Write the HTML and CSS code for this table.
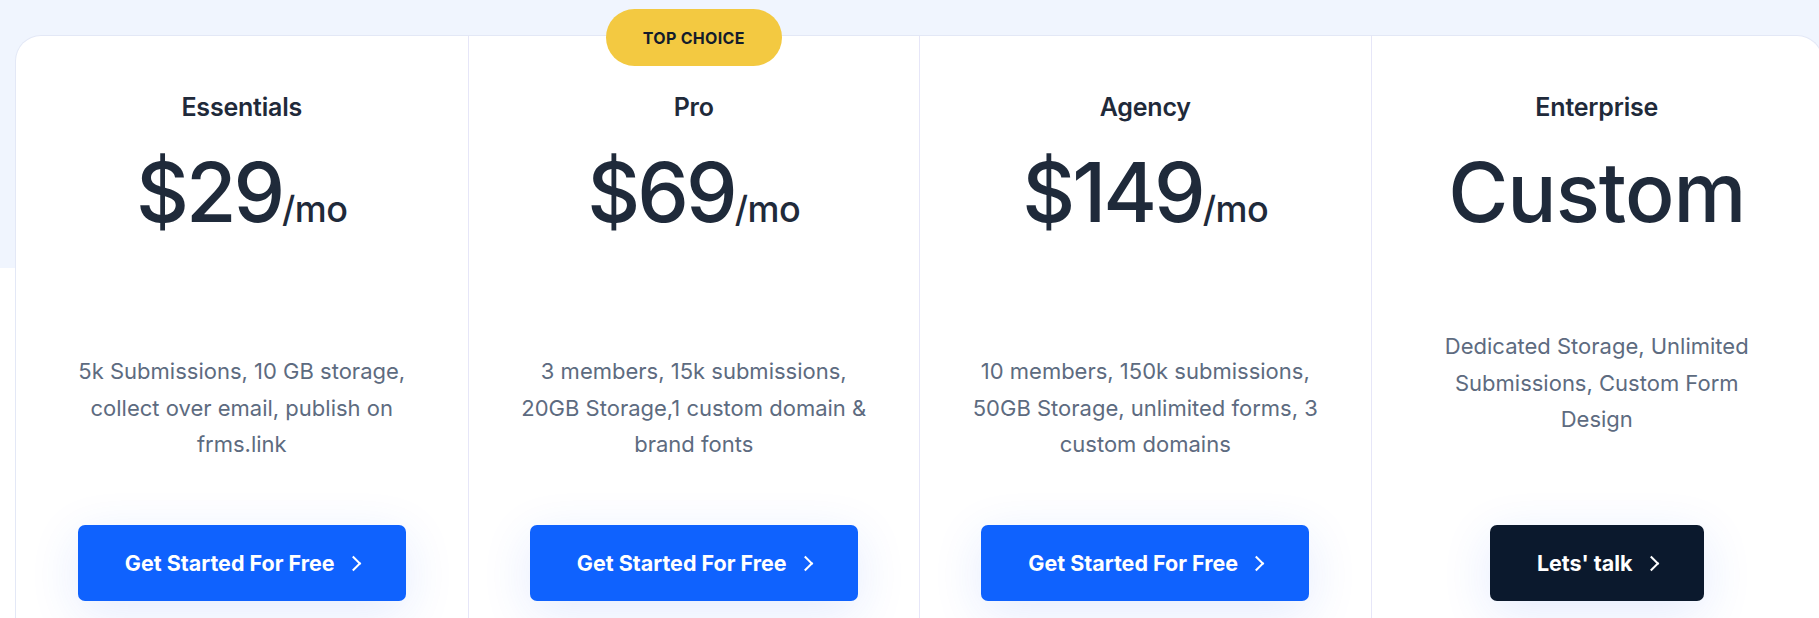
FILE: index.html
```html
<!DOCTYPE html>
<html lang="en">
<head>
  <meta charset="UTF-8">
  <meta name="viewport" content="width=device-width, initial-scale=1.0">
  <title>Pricing</title>
  <link rel="stylesheet" href="styles.css">
</head>
<body>
  <section class="pricing">
    <div class="plans">
      <div class="plan">
        <h3 class="plan-name">Essentials</h3>
        <div class="plan-price">$29<span class="per">/mo</span></div>
        <p class="plan-desc">5k Submissions, 10 GB storage, collect over email, publish on frms.link</p>
        <a href="#" class="btn">Get Started For Free <span class="chev"></span></a>
      </div>

      <div class="plan">
        <span class="badge">TOP CHOICE</span>
        <h3 class="plan-name">Pro</h3>
        <div class="plan-price">$69<span class="per">/mo</span></div>
        <p class="plan-desc">3 members, 15k submissions, 20GB Storage,1 custom domain &amp; brand fonts</p>
        <a href="#" class="btn">Get Started For Free <span class="chev"></span></a>
      </div>

      <div class="plan">
        <h3 class="plan-name">Agency</h3>
        <div class="plan-price">$149<span class="per">/mo</span></div>
        <p class="plan-desc">10 members, 150k submissions, 50GB Storage, unlimited forms, 3 custom domains</p>
        <a href="#" class="btn">Get Started For Free <span class="chev"></span></a>
      </div>

      <div class="plan">
        <h3 class="plan-name">Enterprise</h3>
        <div class="plan-price custom">Custom</div>
        <p class="plan-desc narrow">Dedicated Storage, Unlimited Submissions, Custom Form Design</p>
        <a href="#" class="btn dark">Lets' talk <span class="chev"></span></a>
      </div>
    </div>
  </section>
</body>
</html>
```

FILE: styles.css
```css
/* General Styles */
body {
  margin: 0;
  font-family: Inter, "Noto Sans", sans-serif;
  background-color: #fff;
  color: #1f2a3a;
  overflow: hidden;
}

.pricing {
  background: linear-gradient(#f0f5fe 268px, #fff 268px);
  padding: 35px 0 0 15px;
}

.plans {
  width: 1806px;
  display: grid;
  grid-template-columns: repeat(4, 1fr);
  background: #fff;
  border: 1px solid #e3e8f6;
  border-bottom: none;
  border-radius: 26px 26px 0 0;
  height: 600px;
}

.plan {
  position: relative;
  display: flex;
  flex-direction: column;
  align-items: center;
  text-align: center;
  padding: 0 50px;
  border-left: 1px solid #e6e6f8;
}

.plan:first-child {
  border-left: none;
}

/* Badge */
.badge {
  position: absolute;
  top: -27px;
  left: 50%;
  transform: translateX(-50%);
  width: 176px;
  height: 57px;
  border-radius: 29px;
  background-color: #f3c941;
  color: #131c2b;
  font-size: 16px;
  font-weight: 700;
  letter-spacing: 0.3px;
  display: flex;
  align-items: center;
  justify-content: center;
}

.plan-name {
  margin: 0;
  padding-top: 56px;
  font-size: 25px;
  font-weight: 600;
  line-height: 30px;
  letter-spacing: -0.2px;
}

.plan-price {
  margin-top: 26px;
  font-size: 82px;
  font-weight: 500;
  line-height: 90px;
  letter-spacing: -3px;
  height: 90px;
}

.plan-price.custom {
  letter-spacing: -1px;
}

.plan-price .per {
  font-size: 36px;
  letter-spacing: -0.5px;
}

.plan-desc {
  margin: 115px 0 0;
  font-size: 22px;
  line-height: 36.5px;
  color: #5d6b80;
}

.plan-desc.narrow {
  margin-top: 90px;
  max-width: 320px;
}

/* Buttons */
.btn {
  margin-top: auto;
  margin-bottom: 35px;
  height: 76px;
  padding: 0 47px;
  box-sizing: border-box;
  display: inline-flex;
  align-items: center;
  gap: 17px;
  background-color: #0f62fe;
  color: #fff;
  font-size: 21.5px;
  font-weight: 700;
  text-decoration: none;
  border-radius: 7px;
  box-shadow: 0 12px 50px rgba(30, 90, 250, 0.12);
}

.btn.dark {
  background-color: #0b192d;
}

.chev {
  width: 9px;
  height: 9px;
  border-top: 2.5px solid #fff;
  border-right: 2.5px solid #fff;
  transform: rotate(45deg);
  margin-left: -4px;
}
```
